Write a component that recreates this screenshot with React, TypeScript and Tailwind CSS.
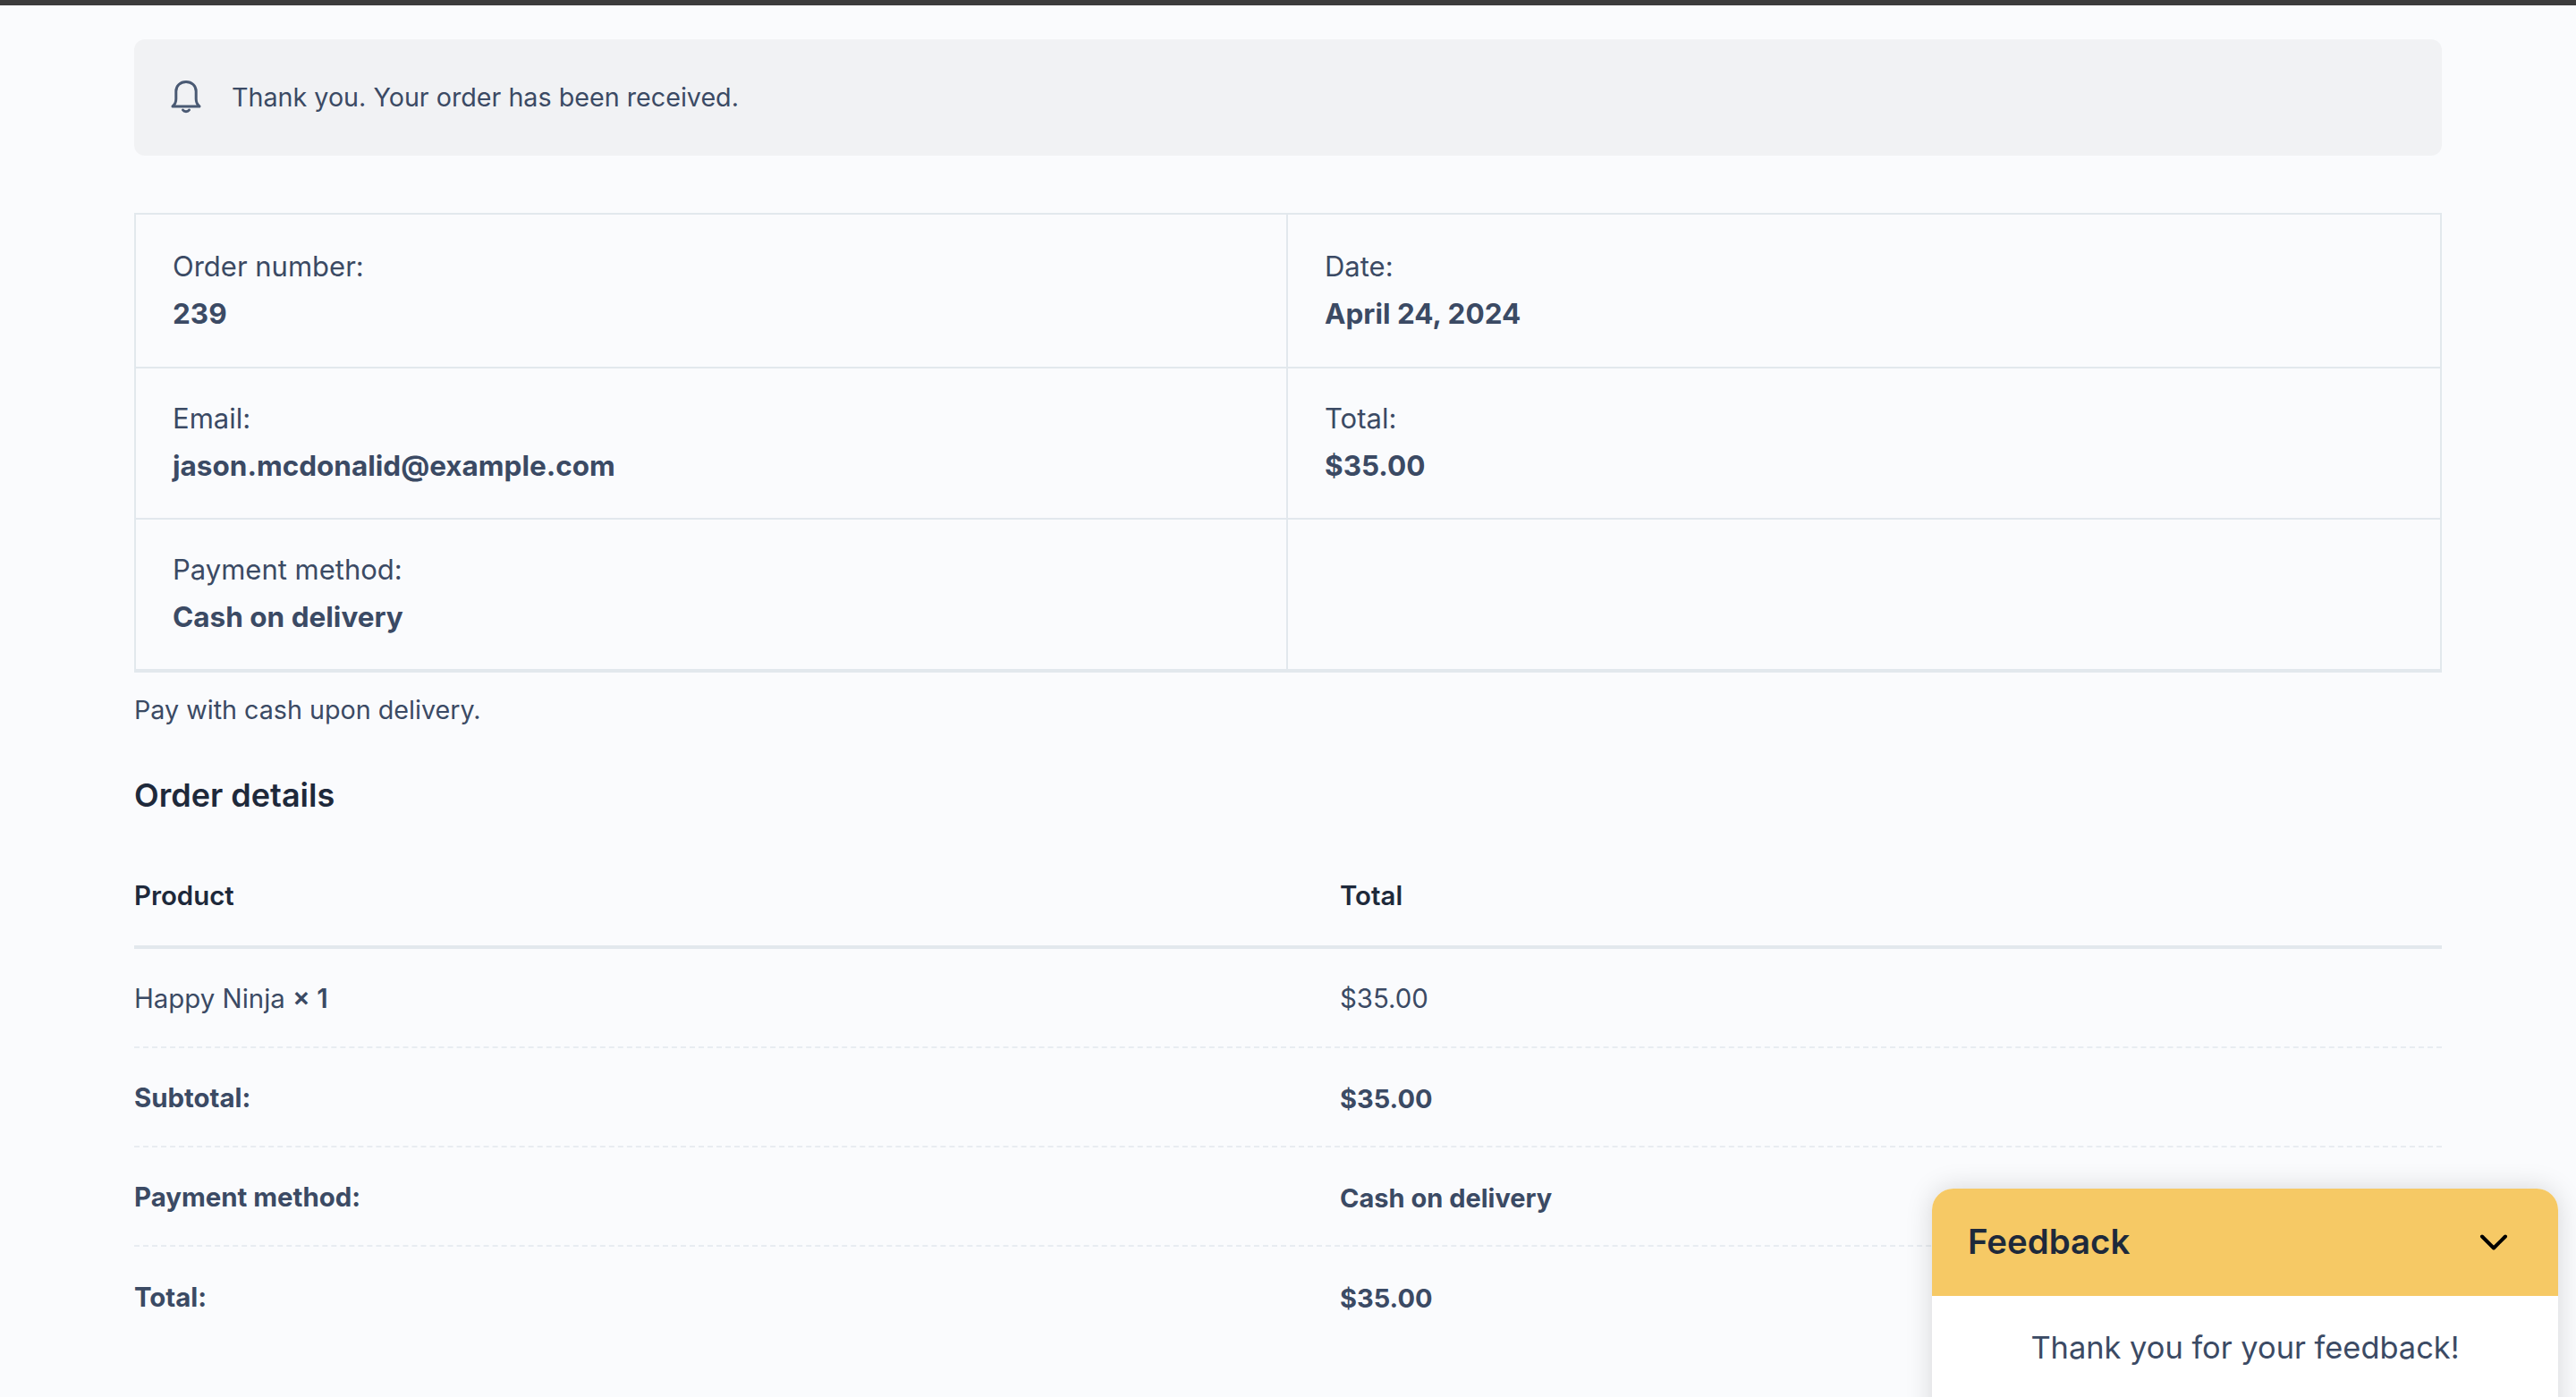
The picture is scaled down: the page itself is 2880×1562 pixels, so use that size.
import React from "react";

const Cell = ({ label, value, last, top }: { label?: string; value?: string; last?: boolean; top?: boolean }) => (
  <div className={`px-[41px] ${top ? "h-[170px] pt-[32px]" : "h-[167px] pt-[30px]"} ${last ? "" : "border-r-2 border-[#e2e8ed]"}`}>
    {label && <div className="text-[31px] leading-[52px] text-[#3b4a64]">{label}</div>}
    {value && <div className="text-[31.5px] leading-[54px] font-[650] text-[#3b4a64]">{value}</div>}
  </div>
);

const Row = ({ left, right, head, plain }: { left: React.ReactNode; right: string; head?: boolean; plain?: boolean }) => (
  <div
    className={`grid grid-cols-[1348px_1fr] items-center ${
      head ? "h-[114px] pt-[1px] border-b-4 border-[#e2e8ed] font-semibold text-[#1e293b]" : "h-[111px] pt-[4px] border-b-2 border-dashed border-[#e8ecf1] text-[#3b4a64]"
    } ${!head && !plain ? "font-[650]" : ""} text-[29.4px]`}
  >
    <div>{left}</div>
    <div className={!head && !plain ? "text-[29px]" : ""}>{right}</div>
  </div>
);

export default function App() {
  return (
    <div
      className="relative h-[1562px] overflow-hidden bg-[#fafbfd] border-t-[6px] border-[#3c3c3c]"
      style={{ fontFamily: "Inter, 'Noto Sans', sans-serif" }}
    >
      <div className="px-[150px] pt-[38px]">
        <div className="flex items-center h-[130px] rounded-xl bg-[#f1f2f4] pl-[40px] gap-[33px]">
          <svg width="36" height="38" viewBox="0 0 36 38" fill="none" stroke="#4a5a73" strokeWidth="3" strokeLinejoin="round" strokeLinecap="round">
            <path d="M3 29c2.6-2.2 3.8-4.6 3.8-8.5V12C6.8 6 11.5 1.5 18 1.5S29.2 6 29.2 12v8.5c0 3.9 1.2 6.3 3.8 8.5H3Z" />
            <path d="M14.5 33c.8 1.2 2 1.8 3.5 1.8s2.7-.6 3.5-1.8" />
          </svg>
          <span className="text-[28.7px] text-[#3b4a64]">Thank you. Your order has been received.</span>
        </div>

        <div className="mt-[64px] border-2 border-b-4 border-[#e2e8ed]">
          <div className="grid grid-cols-2 border-b-2 border-[#e2e8ed]">
            <Cell top label="Order number:" value="239" />
            <Cell top label="Date:" value="April 24, 2024" last />
          </div>
          <div className="grid grid-cols-2 border-b-2 border-[#e2e8ed]">
            <Cell label="Email:" value="jason.mcdonalid@example.com" />
            <Cell label="Total:" value="$35.00" last />
          </div>
          <div className="grid grid-cols-2">
            <Cell label="Payment method:" value="Cash on delivery" />
            <Cell last />
          </div>
        </div>

        <p className="mt-[22px] text-[28.7px] leading-[40px] text-[#3b4a64]">Pay with cash upon delivery.</p>
        <h2 className="mt-[51px] text-[36px] leading-[48px] font-semibold text-[#1e293b]">Order details</h2>

        <div className="mt-[34px]">
          <Row head left="Product" right="Total" />
          <Row plain left={<>Happy Ninja <strong className="font-semibold">× 1</strong></>} right="$35.00" />
          <Row left="Subtotal:" right="$35.00" />
          <Row left="Payment method:" right="Cash on delivery" />
          <div className="grid grid-cols-[1348px_1fr] items-center h-[111px] pt-[4px] font-[650] text-[#3b4a64] text-[29.4px]">
            <div>Total:</div>
            <div className="text-[29px]">$35.00</div>
          </div>
        </div>
      </div>

      <div className="absolute right-[20px] top-[1323px] w-[700px] h-[300px] rounded-t-3xl bg-white shadow-[0_0_30px_rgba(0,0,0,0.15)] overflow-hidden">
        <div className="flex items-center justify-between h-[120px] bg-[#f6c965] pl-[40px] pr-[56px]">
          <span className="text-[38.4px] font-semibold text-[#1e293b]">Feedback</span>
          <svg width="32" height="20" viewBox="0 0 32 20" fill="none" stroke="#000" strokeWidth="4" strokeLinecap="round" strokeLinejoin="round">
            <path d="M3 3.5l13 13 13-13" />
          </svg>
        </div>
        <p className="pt-[36px] text-center text-[34.4px] leading-[44px] text-[#3b4a64]">Thank you for your feedback!</p>
      </div>
    </div>
  );
}
